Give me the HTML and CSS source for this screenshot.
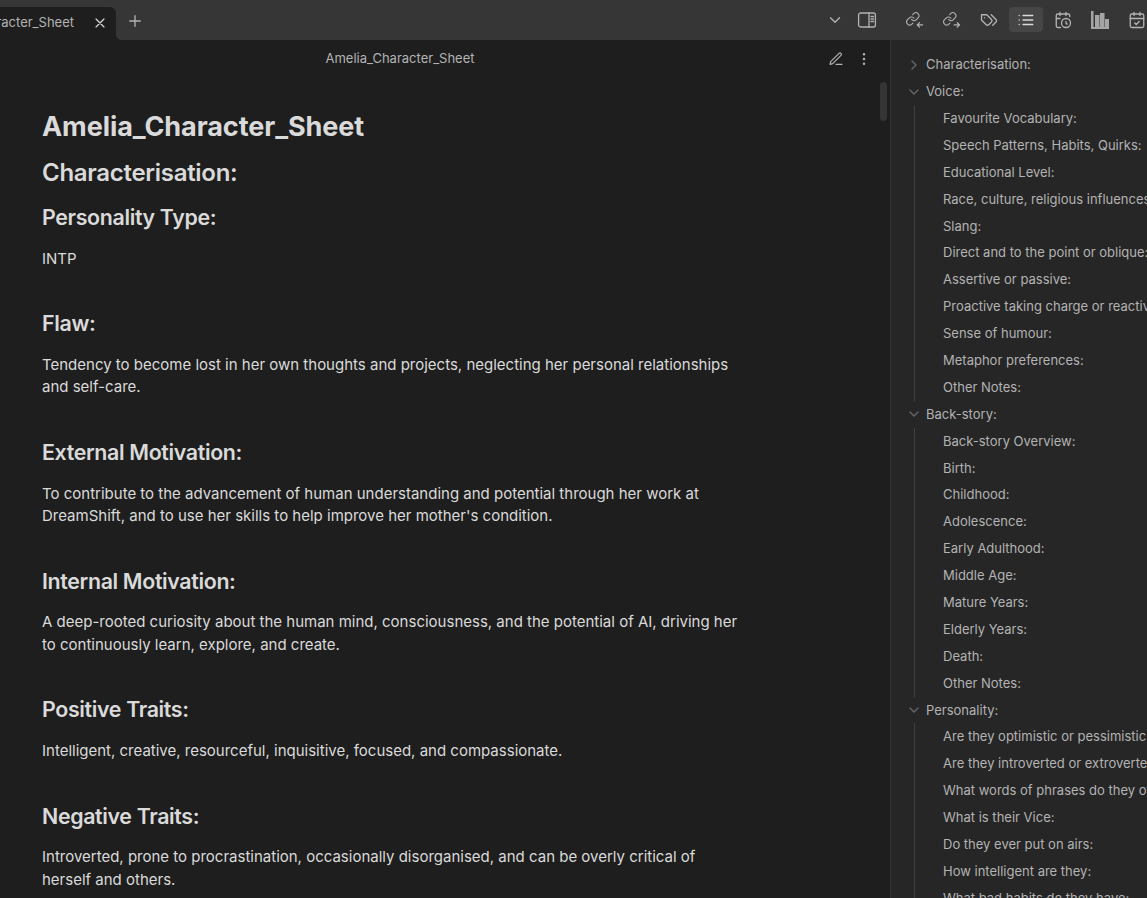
FILE: index.html
```html
<!DOCTYPE html>
<html lang="en">
<head>
<meta charset="utf-8">
<title>Amelia_Character_Sheet</title>
<link rel="stylesheet" href="styles.css">
</head>
<body>
<div class="app">
  <header class="topbar">
    <div class="tab"><span class="tab-title">Amelia_Character_Sheet</span>
      <svg class="icon tab-close" viewBox="0 0 24 24"><path d="M18 6 6 18M6 6l12 12"/></svg>
    </div>
    <svg class="icon new-tab" viewBox="0 0 24 24"><path d="M12 5v14M5 12h14"/></svg>
    <div class="topbar-end">
      <svg class="icon chevron" viewBox="0 0 24 24"><path d="m6 9 6 6 6-6"/></svg>
      <svg class="icon panel" viewBox="0 0 20 18"><rect x="1.6" y="2" width="16.8" height="14" rx="2"/><path d="M12 2v14M14 5.5h2.5M14 8h2.5M14 10.500h2.500"/></svg>
    </div>
    <nav class="side-tabs">
      <span class="side-tab"><svg class="icon" viewBox="0 0 24 24"><g transform="translate(-.8 .6) scale(.82)"><path d="M10 13a5 5 0 0 0 7.540.54l3-3a5 5 0 0 0-7.070-7.070l-1.720 1.710"/><path d="M14 11a5 5 0 0 0-7.540-.54l-3 3a5 5 0 0 0 7.070 7.070l1.710-1.710"/></g><path d="M22 18.500h-7m3-3-3 3 3 3"/></svg></span>
      <span class="side-tab"><svg class="icon" viewBox="0 0 24 24"><g transform="translate(-.8 .6) scale(.82)"><path d="M10 13a5 5 0 0 0 7.540.54l3-3a5 5 0 0 0-7.070-7.070l-1.720 1.710"/><path d="M14 11a5 5 0 0 0-7.540-.54l-3 3a5 5 0 0 0 7.070 7.070l1.710-1.710"/></g><path d="M15 18.500h7m-3-3 3 3-3 3"/></svg></span>
      <span class="side-tab"><svg class="icon" viewBox="0 0 24 24"><path d="M9 5H2v7l6.290 6.290c.94.94 2.480.94 3.420 0l3.580-3.580c.94-.94.94-2.480 0-3.420L9 5Z"/><path d="M6 9.010V9"/><path d="m15 5 6.300 6.300a2.400 2.400 0 0 1 0 3.400L17 19"/></svg></span>
      <span class="side-tab active"><svg class="icon" viewBox="0 0 24 24"><path d="M8 6h13M8 12h13M8 18h13M3 6h.01M3 12h.01M3 18h.01"/></svg></span>
      <span class="side-tab"><svg class="icon" viewBox="0 0 24 24"><path d="M21 7.500V6a2 2 0 0 0-2-2H5a2 2 0 0 0-2 2v14a2 2 0 0 0 2 2h3.500M16 2v4M8 2v4M3 10h5M17.500 17.500 16 16.250V14"/><path d="M22 16a6 6 0 1 1-12 0 6 6 0 0 1 12 0Z"/></svg></span>
      <span class="side-tab"><svg class="icon chart" viewBox="0 0 18 18"><path d="M0 0h2.500v16h15.500v2H0zM4 4h4.500v12H4zM9 2h4.500v14H9zM14 8h4v8h-4z"/></svg></span>
      <span class="side-tab"><svg class="icon" viewBox="0 0 24 24"><rect x="3" y="4" width="18" height="18" rx="2"/><path d="M16 2v4M8 2v4M3 10h18M9 16l2 2 4-4"/></svg></span>
    </nav>
  </header>
  <div class="workspace">
    <main class="pane">
      <div class="pane-header">
        <span class="pane-title">Amelia_Character_Sheet</span>
        <svg class="icon" viewBox="0 0 24 24"><path d="M12 20h9"/><path d="M16.500 3.500a2.120 2.120 0 0 1 3 3L7 19l-4 1 1-4Z"/></svg>
        <svg class="icon" viewBox="0 0 24 24"><circle cx="12" cy="12" r="1"/><circle cx="12" cy="5" r="1"/><circle cx="12" cy="19" r="1"/></svg>
      </div>
      <div class="pane-body">
        <article class="note">
          <h1>Amelia_Character_Sheet</h1>
          <h2>Characterisation:</h2>
          <h3>Personality Type:</h3>
          <p>INTP</p>
          <h3>Flaw:</h3>
          <p>Tendency to become lost in her own thoughts and projects, neglecting her personal relationships and self-care.</p>
          <h3>External Motivation:</h3>
          <p>To contribute to the advancement of human understanding and potential through her work at DreamShift, and to use her skills to help improve her mother's condition.</p>
          <h3>Internal Motivation:</h3>
          <p>A deep-rooted curiosity about the human mind, consciousness, and the potential of AI, driving her to continuously learn, explore, and create.</p>
          <h3>Positive Traits:</h3>
          <p>Intelligent, creative, resourceful, inquisitive, focused, and compassionate.</p>
          <h3>Negative Traits:</h3>
          <p>Introverted, prone to procrastination, occasionally disorganised, and can be overly critical of herself and others.</p>
        </article>
        <div class="scroll-thumb"></div>
      </div>
    </main>
    <aside class="outline">
      <div class="row"><svg class="icon fold" viewBox="0 0 24 24"><path d="m8 4 8 8-8 8"/></svg>Characterisation:</div>
      <div class="row"><svg class="icon fold" viewBox="0 0 24 24"><path d="m4 8 8 8 8-8"/></svg>Voice:</div>
      <div class="children">
        <div class="row">Favourite Vocabulary:</div>
        <div class="row">Speech Patterns, Habits, Quirks:</div>
        <div class="row">Educational Level:</div>
        <div class="row">Race, culture, religious influences:</div>
        <div class="row">Slang:</div>
        <div class="row">Direct and to the point or oblique:</div>
        <div class="row">Assertive or passive:</div>
        <div class="row">Proactive taking charge or reactive:</div>
        <div class="row">Sense of humour:</div>
        <div class="row">Metaphor preferences:</div>
        <div class="row">Other Notes:</div>
      </div>
      <div class="row"><svg class="icon fold" viewBox="0 0 24 24"><path d="m4 8 8 8 8-8"/></svg>Back-story:</div>
      <div class="children">
        <div class="row">Back-story Overview:</div>
        <div class="row">Birth:</div>
        <div class="row">Childhood:</div>
        <div class="row">Adolescence:</div>
        <div class="row">Early Adulthood:</div>
        <div class="row">Middle Age:</div>
        <div class="row">Mature Years:</div>
        <div class="row">Elderly Years:</div>
        <div class="row">Death:</div>
        <div class="row">Other Notes:</div>
      </div>
      <div class="row"><svg class="icon fold" viewBox="0 0 24 24"><path d="m4 8 8 8 8-8"/></svg>Personality:</div>
      <div class="children">
        <div class="row">Are they optimistic or pessimistic:</div>
        <div class="row">Are they introverted or extroverted:</div>
        <div class="row">What words of phrases do they often use:</div>
        <div class="row">What is their Vice:</div>
        <div class="row">Do they ever put on airs:</div>
        <div class="row">How intelligent are they:</div>
        <div class="row">What bad habits do they have:</div>
      </div>
    </aside>
  </div>
</div>
</body>
</html>
```

FILE: styles.css
```css
* { box-sizing: border-box; }
body {
  margin: 0;
  background: #1e1e1e;
  color: #dadada;
  font-family: Inter, sans-serif;
  font-optical-sizing: none;
  font-size: 15px;
  line-height: 1.5;
}
.app {
  display: flex;
  flex-direction: column;
  height: 898px;
  overflow: hidden;
}
.icon {
  width: 16px;
  height: 16px;
  flex: none;
  display: block;
  fill: none;
  stroke: #b3b3b3;
  stroke-width: 1.75;
  stroke-linecap: round;
  stroke-linejoin: round;
}

/* Top bar */
.topbar {
  display: flex;
  height: 40px;
  flex: none;
  background: #363636;
  overflow: hidden;
}
.tab {
  position: relative;
  display: flex;
  align-items: center;
  justify-content: flex-end;
  width: 116px;
  height: 33px;
  margin-top: 7px;
  padding: 0 8px 2px 0;
  background: #1e1e1e;
  border-top-right-radius: 6px;
  font-size: 13px;
  color: #b3b3b3;
}
.tab::after {
  content: "";
  position: absolute;
  left: 100%;
  bottom: 0;
  width: 5px;
  height: 5px;
  background: radial-gradient(circle at 100% 0, transparent 4.5px, #1e1e1e 5px);
}
.tab-title {
  margin-right: 18px;
  padding-top: 1.2px;
}
.tab-close { stroke: #dadada; }
.new-tab {
  width: 18px;
  height: 18px;
  margin: 12px 0 0 10px;
}
.topbar-end {
  display: flex;
  align-items: center;
  gap: 13px;
  margin-left: auto;
  padding-right: 20px;
}
.chevron { width: 18px; height: 18px; }
.panel { width: 20px; height: 18px; stroke-width: 1.3; }
.side-tabs {
  display: flex;
  gap: 3px;
  width: 250px;
  padding: 7px 0 0 1px;
}
.side-tab {
  display: flex;
  align-items: center;
  justify-content: center;
  flex: none;
  width: 34px;
  height: 25px;
  border-radius: 4px;
}
.side-tab .icon { width: 18px; height: 18px; }
.side-tab.active { background: #464646; }
.side-tab.active .icon { stroke: #dadada; }
.side-tab .chart { fill: #a5a5a5; stroke: none; }

/* Note pane */
.workspace {
  display: flex;
  flex: 1;
  min-height: 0;
}
.pane {
  display: flex;
  flex-direction: column;
  width: 890px;
  flex: none;
}
.pane-header {
  display: flex;
  align-items: center;
  gap: 12px;
  height: 38px;
  flex: none;
  padding-right: 18px;
}
.pane-title {
  flex: 1;
  margin-right: 16px;
  text-align: center;
  font-size: 13px;
  color: #b3b3b3;
}
.pane-body {
  display: flex;
  justify-content: space-between;
  flex: 1;
  min-height: 0;
}
.note {
  width: 742px;
  padding: 32.6px 0 0 42px;
}
.note h1, .note h2, .note h3, .note p { margin: 0; }
.note h1 {
  margin-bottom: 16px;
  font-size: 27.03px;
  font-weight: 700;
  line-height: 1.2;
  letter-spacing: -0.003em;
}
.note h2 {
  margin-bottom: 16px;
  font-size: 24.03px;
  font-weight: 600;
  line-height: 1.2;
  letter-spacing: -0.0125em;
}
.note h3 {
  margin-bottom: 16px;
  font-size: 21.36px;
  font-weight: 600;
  line-height: 1.3;
  letter-spacing: -0.016em;
}
.note p + h3 { margin-top: 40px; }
.scroll-thumb {
  width: 7px;
  height: 39px;
  margin: 4px 3px 0 0;
  border-radius: 4px;
  background: #353535;
}

/* Outline */
.outline {
  flex: 1;
  min-width: 0;
  padding: 11.2px 0 0 17px;
  border-left: 1px solid #363636;
  background: #262626;
  overflow: hidden;
  font-size: 13px;
  line-height: 16.9px;
  color: #b3b3b3;
}
.row {
  display: flex;
  align-items: center;
  height: 26.9px;
  white-space: nowrap;
}
.fold {
  width: 12px;
  height: 12px;
  margin-right: 6px;
  stroke: #666;
  stroke-width: 2.8;
}
.children {
  margin-left: 6px;
  padding-left: 28px;
  border-left: 1px solid #3f3f3f;
}
```
